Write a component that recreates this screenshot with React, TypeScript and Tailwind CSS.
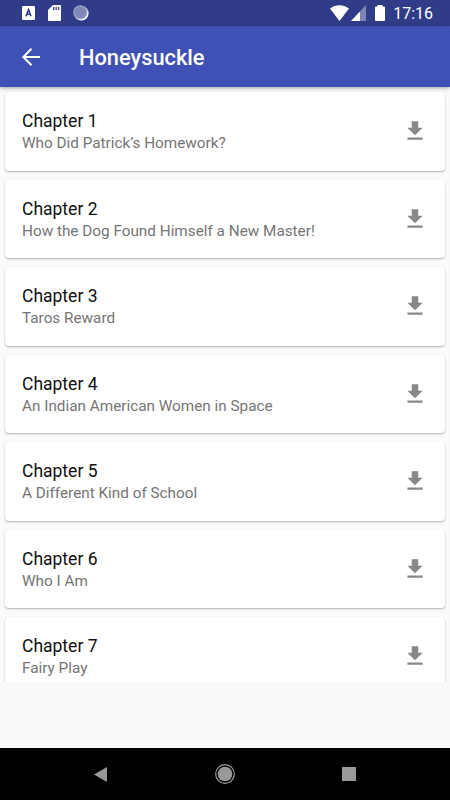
const chapters = [
  { name: "Chapter 1", title: "Who Did Patrick’s Homework?" },
  { name: "Chapter 2", title: "How the Dog Found Himself a New Master!" },
  { name: "Chapter 3", title: "Taros Reward" },
  { name: "Chapter 4", title: "An Indian American Women in Space" },
  { name: "Chapter 5", title: "A Different Kind of School" },
  { name: "Chapter 6", title: "Who I Am" },
  { name: "Chapter 7", title: "Fairy Play" },
]

function StatusBar() {
  return (
    <div className="flex h-[26px] shrink-0 items-center justify-between bg-[#303c87] pl-[22px] pr-[17px] text-white">
      <div className="flex items-center">
        <svg className="h-[14px] w-[13px]" viewBox="0 0 13 14">
          <rect width="13" height="14" rx="1.2" fill="white" />
          <path d="M4 10.200 6.500 3.800 9 10.200M4.900 8.200h3.200" fill="none" stroke="#303c87" strokeWidth="1.600" />
        </svg>
        <svg className="ml-[13px] h-[16px] w-[13px]" viewBox="0 0 13 16">
          <path d="M5 0h7q1 0 1 1v14q0 1-1 1H1q-1 0-1-1V5z" fill="white" />
          <path d="M5.700 2v3M8.200 2v3M10.700 2v3" stroke="#303c87" strokeWidth="1.300" />
        </svg>
        {/* Sync spinner: bright disc behind, dim dotted disc on top */}
        <svg className="ml-[12px] h-[16px] w-[16px]" viewBox="0 0 16 16">
          <circle cx="8.300" cy="8.300" r="7.300" fill="white" />
          <circle cx="7.300" cy="7.300" r="7" fill="#7f87b8" />
          <circle cx="7.300" cy="7.300" r="6.300" fill="none" stroke="#a9afd2" strokeWidth="1.300" strokeDasharray="1.200 1" />
        </svg>
      </div>
      <div className="flex items-center">
        <svg className="h-[16px] w-[19px]" viewBox="0 0 19 16" fill="white">
          <path d="M0 3.500C5.500-1 13.500-1 19 3.500L9.500 16z" />
        </svg>
        <svg className="ml-[2px] h-[16px] w-[15px]" viewBox="0 0 15 16">
          <path d="M15 0v16H0z" fill="#7f86b5" />
          <path d="M9 6.400V16H0z" fill="white" />
        </svg>
        <svg className="ml-[9px] h-[16px] w-[10px]" viewBox="0 0 10 16" fill="white">
          <path d="M2.500 0h5v1.500H9q1 0 1 1V15q0 1-1 1H1q-1 0-1-1V2.500q0-1 1-1h1.500z" />
        </svg>
        <span className="relative top-px ml-[8px] text-[16px] leading-none">17:16</span>
      </div>
    </div>
  )
}

function DownloadIcon() {
  return (
    <svg className="h-[26px] w-[26px] shrink-0" viewBox="0 0 24 24" fill="#888888">
      <path d="M19 9h-4V3H9v6H5l7 7 7-7zM5 18v2h14v-2H5z" />
    </svg>
  )
}

export default function App() {
  return (
    <div className="flex h-[800px] w-[450px] flex-col overflow-hidden bg-[#fafafa] font-['Roboto',sans-serif]">
      <StatusBar />
      <header className="z-10 flex h-[61px] shrink-0 items-center bg-[#3f51b5] pl-[22px] text-white shadow-[0_1px_4px_rgba(0,0,0,0.35)]">
        <svg className="h-[18px] w-[18px]" viewBox="0 0 18 18" fill="none" stroke="white" strokeWidth="2">
          <path d="M18 9H1.500M9.500.8 1.300 9l8.200 8.200" />
        </svg>
        <h1 className="ml-[39px] pt-[3px] text-[21.800px] font-medium">Honeysuckle</h1>
      </header>
      <main className="flex h-[595px] shrink-0 flex-col gap-[9px] overflow-hidden px-[5px] pt-[5px]">
        {chapters.map((chapter) => (
          <div
            key={chapter.name}
            className="flex h-[78.500px] shrink-0 items-center justify-between rounded-[4px] bg-white pl-[17px] pr-[17px] shadow-[0_1px_2px_rgba(0,0,0,0.3)]"
          >
            <div className="pt-[2px]">
              <h2 className="text-[17.500px] leading-[23px] text-[#111111]">{chapter.name}</h2>
              <p className="text-[15.300px] leading-[21px] text-[#757575]">{chapter.title}</p>
            </div>
            <DownloadIcon />
          </div>
        ))}
      </main>
      <nav className="mt-auto flex h-[52px] shrink-0 items-center justify-between bg-black pl-[93px] pr-[94px]">
        <svg className="h-[15px] w-[14px]" viewBox="0 0 14 15" fill="#999999">
          <path d="M14 0v15L1 7.500z" />
        </svg>
        <svg className="h-[20px] w-[20px]" viewBox="0 0 20 20">
          <circle cx="10" cy="10" r="9.300" fill="none" stroke="#999999" strokeWidth="1.200" />
          <circle cx="10" cy="10" r="7.300" fill="#999999" />
        </svg>
        <div className="h-[14px] w-[14px] bg-[#999999]" />
      </nav>
    </div>
  )
}
